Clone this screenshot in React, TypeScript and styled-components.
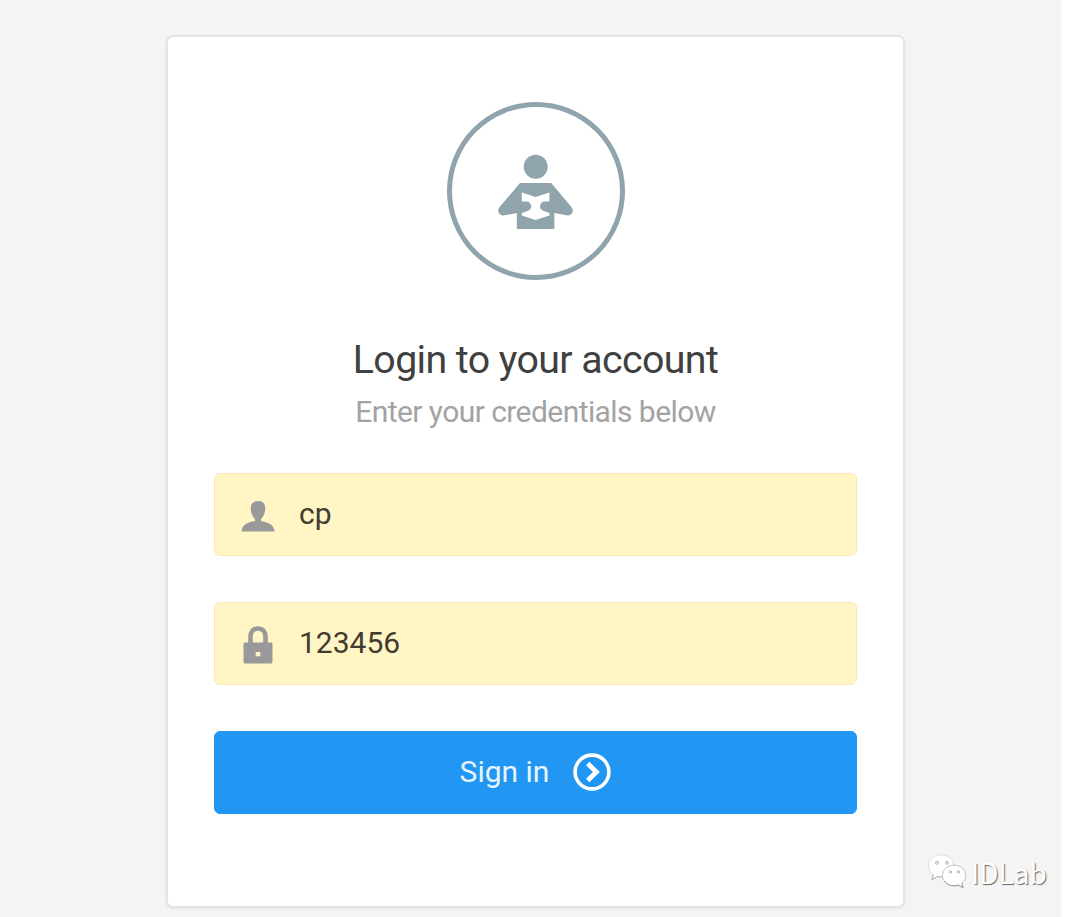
import React from 'react';
import styled, { createGlobalStyle } from 'styled-components';

const GlobalStyle = createGlobalStyle`
  * { box-sizing: border-box; }
  body { margin: 0; background: #fff; font-family: Roboto, "Liberation Sans", sans-serif; }
  svg { display: block; flex: none; }
`;

const Page = styled.main`
  position: relative;
  width: 1061px;
  height: 917px;
  padding: 35px 156px 0 166px;
  background: #f4f4f4;
  overflow: hidden;
`;

const Card = styled.form`
  display: flex;
  flex-direction: column;
  align-items: center;
  width: 739px;
  height: 873px;
  padding: 65px 45px 0;
  background: #fff;
  border: 2px solid #e4e4e4;
  border-radius: 7px;
  box-shadow: 0 1px 3px rgba(0, 0, 0, 0.06);
`;

const Emblem = styled.div`
  display: flex;
  align-items: center;
  justify-content: center;
  width: 178px;
  height: 178px;
  border: 5px solid #90a4ae;
  border-radius: 50%;
`;

const Title = styled.h1`
  margin: 57px 0 0;
  color: #404040;
  font-size: 39.3px;
  font-weight: 400;
  line-height: 46px;
  letter-spacing: -0.59px;
  text-align: center;
  white-space: nowrap;
`;

const Subtitle = styled.p`
  margin: 11px 0 0;
  color: #a3a3a3;
  font-size: 30px;
  line-height: 36px;
  letter-spacing: -0.57px;
  text-align: center;
  white-space: nowrap;
`;

const Field = styled.div<{ $gap: number }>`
  display: flex;
  align-items: center;
  width: 643px;
  height: 83px;
  margin-top: ${(p) => p.$gap}px;
  padding-left: 26px;
  gap: 24px;
  background: #fff5c5;
  border: 1px solid #ffe6b8;
  border-radius: 6px;
`;

const Value = styled.span`
  padding-bottom: 2px;
  color: #443b30;
  font-size: 30px;
  line-height: 36px;
`;

const SignIn = styled.button`
  display: flex;
  align-items: center;
  justify-content: center;
  gap: 24px;
  width: 643px;
  height: 83px;
  margin-top: 46px;
  padding: 0 0 1px;
  border: 1px solid #2196f3;
  border-radius: 6px;
  background: #2196f3;
  color: #e8f4fe;
  font: 400 30px/36px Roboto, "Liberation Sans", sans-serif;
`;

const Watermark = styled.div`
  position: absolute;
  left: 926px;
  top: 852px;
  display: flex;
  align-items: center;
  gap: 5px;
  color: #fff;
  font: 400 28px/40px "Noto Sans CJK SC", sans-serif;
  text-shadow: 1px 1px 1px #666;
`;

const Reader = () => (
  <svg width="76" height="76" viewBox="498 153 76 76" fill="#90a4ae">
    <circle cx="535.7" cy="166.7" r="12" />
    <path d="M520 183H551.2L571.8 207.5Q574.5 212 570.5 214.8Q569 215.6 566 215.3L554.4 213V229.4H516.8V213L505 215.3Q502 215.6 500.5 214.8Q496.5 212 499.2 207.5Z" />
    <path fill="#fff" d="M521.8 192.6L535.6 197L549.4 192.6V201.5H544.5A4.8 4.8 0 0 0 543 210.7L549.4 213V215.5L535.6 220L521.8 215.5V213L528.2 210.7A4.8 4.8 0 0 0 526.7 201.5H521.8Z" />
  </svg>
);

const UserIcon = () => (
  <svg width="34" height="38" viewBox="0 0 34 38" fill="#999">
    <path d="M17 5C21.8 5 24.3 7.8 24.3 12.3C24.3 17 22.5 20.7 20 23.3V25.2C27.5 25.8 33.5 29.5 33.5 35.5H.5C.5 29.5 6.5 25.8 14 25.2V23.3C11.5 20.7 9.7 17 9.7 12.3C9.7 7.8 12.2 5 17 5Z" />
  </svg>
);

const LockIcon = () => (
  <svg width="34" height="40" viewBox="0 0 34 40">
    <path d="M9.5 20V13C9.5 7.8 12.2 4.5 17 4.5S24.5 7.8 24.5 13V20" fill="none" stroke="#999" strokeWidth="4.6" />
    <path fill="#999" fillRule="evenodd" d="M4 18.6H30Q31.5 18.6 31.5 20V38Q31.5 39.4 30 39.4H4Q2.5 39.4 2.5 38V20Q2.5 18.6 4 18.6ZM14.7 28V32.3H19.3V28Z" />
  </svg>
);

const ArrowIcon = () => (
  <svg width="38" height="38" viewBox="0 0 38 38" fill="none" stroke="#fff">
    <circle cx="19" cy="19" r="16.9" strokeWidth="3.6" />
    <path d="M14.7 10.5L23.4 19L14.7 27.5" strokeWidth="4.8" />
  </svg>
);

const ChatIcon = () => (
  <svg width="40" height="36" viewBox="0 0 40 36" fill="#fff" stroke="#aaa" strokeWidth="0.7">
    <path d="M15 .8C8 .8 2.3 5.6 2.3 11.8C2.3 15.4 4.2 18.5 7.2 20.5L6 25.8L11.4 22.6C12.6 22.9 13.8 23 15 23C22 23 27.7 18.1 27.7 11.8S22 .8 15 .8Z" stroke="#d0d0d0" />
    <path d="M7.2 20.5L6 25.8L11.4 22.6Q13.8 23.2 16.5 22.8" fill="none" stroke="#999" />
    <path d="M28 11.2C21.4 11.2 16.5 15.7 16.5 21.4S21.4 31.8 28 31.8C29.5 31.8 30.9 31.6 32.2 31.1L37 33.6L35.8 29.2C38.5 27.3 39.6 24.6 39.6 21.4C39.6 15.7 34.6 11.2 28 11.2Z" />
    <path d="M18.5 27Q22 31.8 28 31.8C29.5 31.8 30.9 31.6 32.2 31.1L37 33.6L35.8 29.2" fill="none" stroke="#888" />
    <g fill="#eee" stroke="#999"><circle cx="11" cy="8.8" r="1.5" /><circle cx="21" cy="8.8" r="1.5" /><circle cx="24.5" cy="18" r="1.2" /><circle cx="32.5" cy="18" r="1.2" /></g>
  </svg>
);

export default function App() {
  return (
    <>
      <GlobalStyle />
      <Page>
        <Card>
          <Emblem><Reader /></Emblem>
          <Title>Login to your account</Title>
          <Subtitle>Enter your credentials below</Subtitle>
          <Field $gap={43}><UserIcon /><Value>cp</Value></Field>
          <Field $gap={46}><LockIcon /><Value>123456</Value></Field>
          <SignIn type="button">Sign in<ArrowIcon /></SignIn>
        </Card>
        <Watermark><ChatIcon />IDLab</Watermark>
      </Page>
    </>
  );
}
